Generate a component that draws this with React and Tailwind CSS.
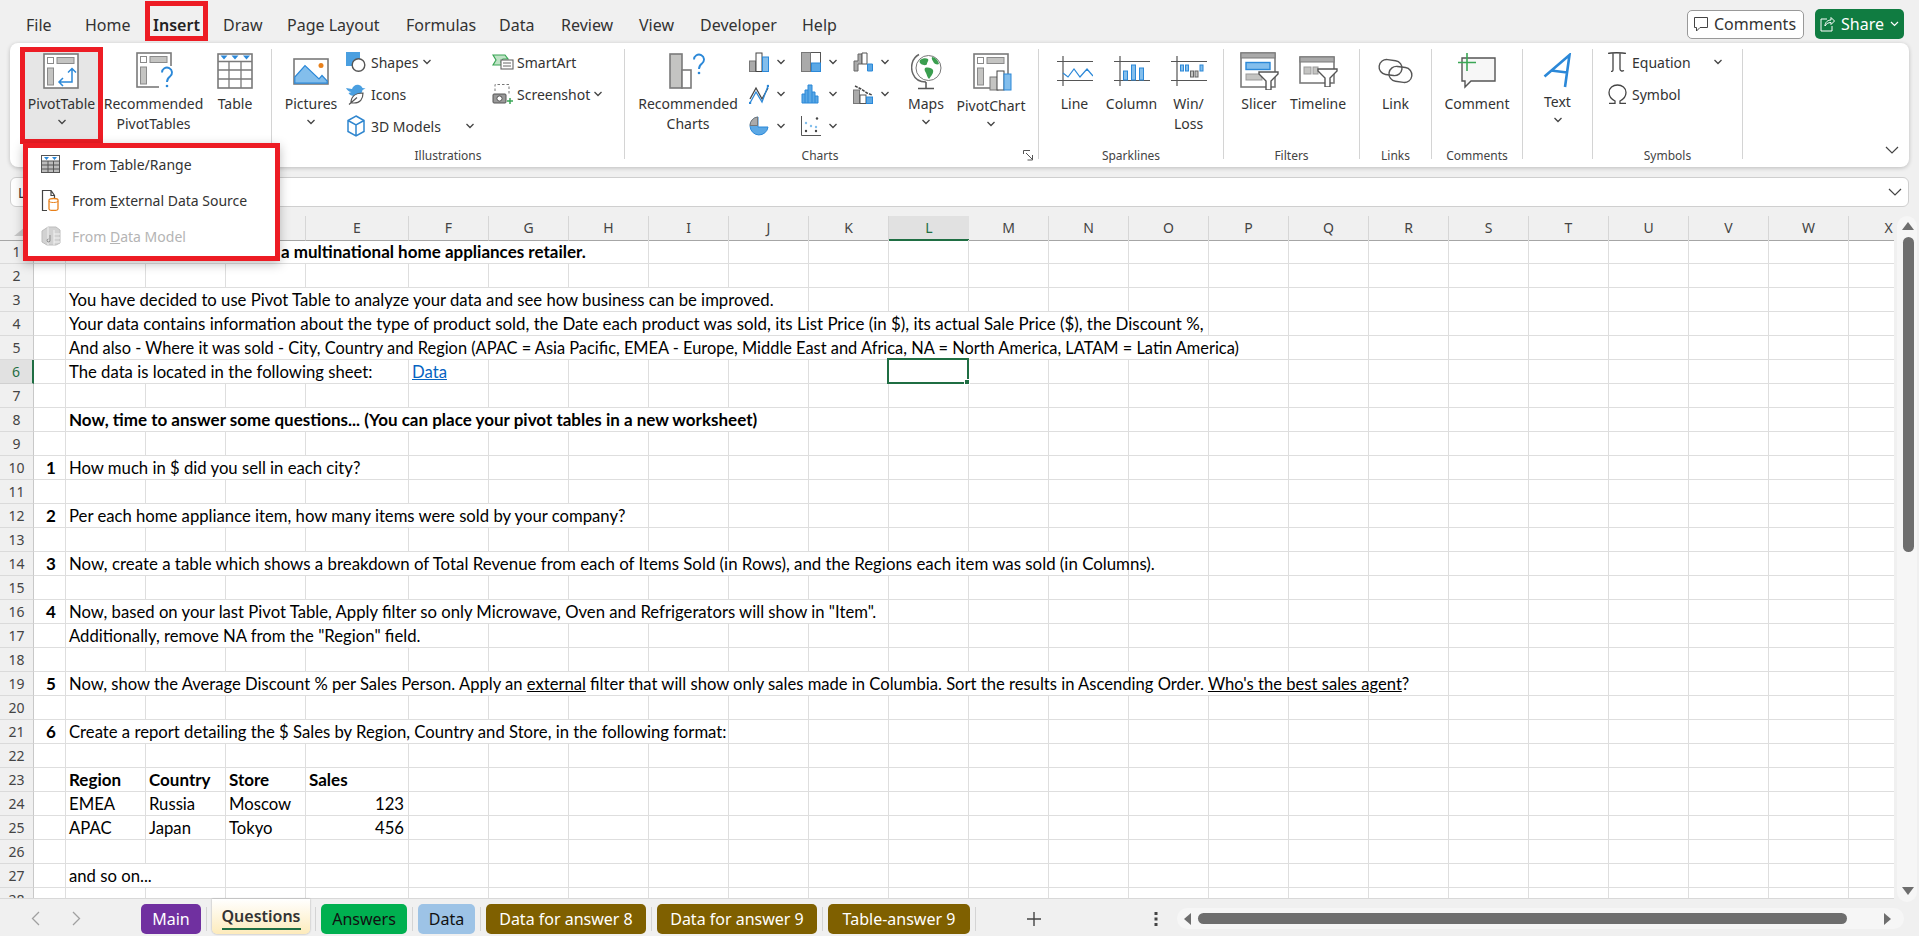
const UI = { fontFamily: '"Noto Sans", sans-serif' };
const CELL = { fontFamily: 'Lato, sans-serif' };

const G = '#7a7a7a';
const F = '#c4c4c2';
const B = '#2b88d8';
const L = '#83beec';

function Chevron({ className = '' }) {
  return (
    <svg width="10" height="6" viewBox="0 0 10 6" className={className}>
      <path d="M1.5 1l3.5 3.5L8.500 1" fill="none" stroke="#444" strokeWidth="1.3" />
    </svg>
  );
}

function PanelBase({ children }) {
  return (
    <svg width="40" height="38" viewBox="0 0 40 38" className="overflow-visible">
      <rect x="1" y="1" width="34" height="34" fill="#fff" stroke={G} strokeWidth="1.6" />
      <rect x="4.500" y="4.500" width="6" height="6" fill="#fff" stroke="#8a8a8a" />
      <rect x="14" y="4.500" width="17" height="6" fill={F} stroke="#8a8a8a" />
      <rect x="4.500" y="15" width="6" height="17" fill={F} stroke="#8a8a8a" />
      {children}
    </svg>
  );
}

const PivotIcon = () => (
  <PanelBase>
    <path d="M16 29h13V16M25 19.500l4-4 4 4M20 25l-4 4 4 4" fill="none" stroke={B} strokeWidth="1.5" />
  </PanelBase>
);

const Question = ({ x = 0, y = 0 }) => (
  <g transform={`translate(${x} ${y})`}>
    <path d="M1 5.500a5 5 0 1 1 8 4c-2 1.500-3 2.500-3 5.500" fill="none" stroke={B} strokeWidth="1.900" />
    <circle cx="6" cy="19" r="1.300" fill={B} />
  </g>
);

const RecPivotIcon = () => (
  <PanelBase>
    <rect x="23" y="14" width="14" height="24" fill="#fff" />
    <Question x="25" y="15" />
  </PanelBase>
);

function TableIcon() {
  return (
    <svg width="36" height="36" viewBox="0 0 36 36">
      <rect x="1" y="1" width="34" height="34" fill="#fff" stroke={G} strokeWidth="1.6" />
      <path d="M1 8.500h34M1 17h34M1 26h34M12 8.500V35M24 8.500V35" stroke={G} strokeWidth="1.300" />
      <path d="M3.500 2.500h7l-3.500 4zM14.500 2.500h7l-3.500 4zM26 2.500h7l-3.500 4z" fill={B} />
    </svg>
  );
}

function PicturesIcon() {
  return (
    <svg width="36" height="27" viewBox="0 0 36 27">
      <rect x="1" y="1" width="34" height="25" fill="#fff" stroke={G} strokeWidth="1.6" />
      <path d="M1.800 25.200V19L12 7.500 26 21l3-3.500 5.200 5.500v2.200z" fill={L} stroke={B} strokeWidth="1.200" />
      <circle cx="28" cy="7.500" r="2.500" fill="#e8801a" />
    </svg>
  );
}

function ShapesIcon() {
  return (
    <svg width="20" height="20" viewBox="0 0 20 20">
      <rect x="0" y="0" width="14" height="14" fill="#4a9fe0" />
      <circle cx="12.500" cy="13" r="6.300" fill="#fff" stroke="#555" strokeWidth="1.400" />
    </svg>
  );
}

function IconsIcon() {
  return (
    <svg width="20" height="22" viewBox="0 0 20 22">
      <path d="M0 5l6 1c1-3 4-5 7-4 2 .5 3 2 3.500 3l3 .5-3 1.500c-.500 4-4 6-8 6-3 0-5-1-6-3l3-1C3 9 1 7 0 5z" fill="#4a9fe0" />
      <path d="M5 20c0-6 4-10 12-10 0 6-3 10-9 10H5zM3 21.500l8-7" fill="#fff" stroke="#555" strokeWidth="1.200" />
    </svg>
  );
}

function ModelsIcon() {
  return (
    <svg width="20" height="22" viewBox="0 0 20 22">
      <path d="M10 1l8 4.500v11L10 21l-8-4.500v-11zM2 5.500l8 4.500 8-4.500M10 10v11" fill="#fff" stroke="#2f86cf" strokeWidth="1.500" />
    </svg>
  );
}

function SmartArtIcon() {
  return (
    <svg width="22" height="20" viewBox="0 0 22 20">
      <path d="M1 3h12l3 4h-5l-2 3 2 3H1l3-5z" fill="#bfe3c6" stroke="#3aa655" strokeWidth="1.200" />
      <rect x="9" y="8" width="12" height="9" fill="#fff" stroke="#666" strokeWidth="1.100" />
      <path d="M11 11h8M11 14h8" stroke="#666" />
    </svg>
  );
}

function ScreenshotIcon() {
  return (
    <svg width="22" height="22" viewBox="0 0 22 22">
      <path d="M3 8V1.500h14V11" fill="none" stroke="#777" strokeDasharray="2.500 2" />
      <rect x="1" y="11" width="13" height="9" rx="1" fill="#999" stroke="#555" />
      <circle cx="7.500" cy="15.500" r="2.600" fill="#fff" stroke="#555" />
      <path d="M18 15v6M15 18h6" stroke="#3aa655" strokeWidth="1.500" />
    </svg>
  );
}

// small chart icons in the Charts group
function ColumnChart() {
  return (
    <svg width="20" height="20" viewBox="0 0 20 20">
      <rect x="0.500" y="9" width="6" height="10.500" fill="#aaa" stroke="#777" />
      <rect x="7" y="1" width="6" height="18.500" fill="#fff" stroke="#444" />
      <rect x="13.500" y="5" width="6" height="14.500" fill={L} stroke={B} />
    </svg>
  );
}
function TreeChart() {
  return (
    <svg width="20" height="20" viewBox="0 0 20 20">
      <rect x="0.500" y="0.500" width="19" height="19" fill="#fff" stroke="#555" />
      <rect x="0.500" y="0.500" width="9" height="19" fill="#aaa" stroke="#777" />
      <rect x="10.500" y="11" width="9" height="8.500" fill="#5ba8e5" stroke={B} />
    </svg>
  );
}
function WaterfallChart() {
  return (
    <svg width="20" height="20" viewBox="0 0 20 20">
      <path d="M1 19V9h4V2h4v10H5v7z" fill="#aaa" stroke="#666" />
      <path d="M9 1h5v11H9z" fill="#fff" stroke="#555" />
      <path d="M14.500 12h5v7h-5z" fill="#5ba8e5" stroke={B} />
    </svg>
  );
}
function LineChart() {
  return (
    <svg width="20" height="20" viewBox="0 0 20 20">
      <path d="M1 15L7 4l6 11 6-11" fill="none" stroke="#444" strokeWidth="1.300" />
      <path d="M1 19L7 8l6 10 6-16" fill="none" stroke={B} strokeWidth="1.300" />
      <circle cx="1" cy="19" r="1.300" fill={B} /><circle cx="19" cy="2" r="1.300" fill={B} />
    </svg>
  );
}
function HistChart() {
  return (
    <svg width="18" height="20" viewBox="0 0 18 20">
      <path d="M1 19V10h3V6h3V1h4v7h3v4h3v7z" fill="#5ba8e5" stroke={B} />
      <path d="M4 19V10M7 19V6M11 19V8M14 19v-7" stroke={B} />
    </svg>
  );
}
function ComboChart() {
  return (
    <svg width="20" height="20" viewBox="0 0 20 20">
      <rect x="0.500" y="6" width="6" height="13.500" fill="#aaa" stroke="#777" />
      <rect x="7" y="11" width="6" height="8.500" fill="#fff" stroke="#555" />
      <rect x="13.500" y="13" width="6" height="6.500" fill="#5ba8e5" stroke={B} />
      <path d="M2 2l6 3 6 4 5 2" fill="none" stroke="#444" strokeWidth="1.500" strokeDasharray="3 1" />
    </svg>
  );
}
function PieChart() {
  return (
    <svg width="20" height="20" viewBox="0 0 20 20">
      <path d="M9 1a9 9 0 1 0 10 10H9z" fill="#5ba8e5" stroke={B} />
      <path d="M8.500 1A8.500 8.500 0 0 0 1 9.500h7.500z" fill="#aaa" stroke="#777" />
    </svg>
  );
}
function ScatterChart() {
  return (
    <svg width="20" height="20" viewBox="0 0 20 20">
      <path d="M.5 0v19.500H20" fill="none" stroke="#555" />
      <g fill={L}><circle cx="5" cy="7" r="1.200" /><circle cx="10" cy="10" r="1.200" /><circle cx="15" cy="11" r="1.200" /></g>
      <g fill="#444"><circle cx="16" cy="2.500" r="1.200" /><circle cx="5" cy="15" r="1.200" /><circle cx="15" cy="15" r="1.200" /></g>
    </svg>
  );
}

function RecChartsIcon() {
  return (
    <svg width="38" height="36" viewBox="0 0 38 36">
      <rect x="1" y="1" width="12" height="34" fill={F} stroke={G} strokeWidth="1.600" />
      <rect x="13" y="17" width="9" height="18" fill="#fff" stroke={G} strokeWidth="1.600" />
      <Question x="24" y="1" />
    </svg>
  );
}

function MapsIcon() {
  return (
    <svg width="31" height="37" viewBox="0 0 31 37">
      <path d="M8 1.500C1 5 -1 14 2 21c2 5 7 8 13 8" fill="none" stroke="#666" strokeWidth="1.500" />
      <path d="M15 29v6M7 35.500h16" stroke="#555" strokeWidth="1.500" />
      <circle cx="17.500" cy="15" r="12.500" fill="#fff" stroke="#777" />
      <path d="M9 7c3-2 6-2 8-1 1 2-1 3-1 5-1 2-4 1-6 0-1-1-2-2-1-4zM21 4c3 0 6 3 7 7-2 1-4 0-5-1-1-2-3-4-2-6zM14 15c3-1 7 0 8 2 1 3-2 6-4 9-2-2-2-4-3-6-1-2-2-3-1-5z" fill="#3a9e4f" />
    </svg>
  );
}

const PivotChartIcon = () => (
  <PanelBase>
    <rect x="17" y="24" width="8" height="13" fill={F} stroke="#777" />
    <rect x="24" y="18" width="7" height="19" fill="#fff" stroke="#444" />
    <rect x="31" y="21" width="7" height="16" fill={L} stroke={B} />
  </PanelBase>
);

function Spark({ children }) {
  return (
    <svg width="36" height="30" viewBox="0 0 36 30">
      <path d="M0 5.500h36M0 24.500h36M6 0v30" stroke="#555" strokeWidth="1.200" />
      {children}
    </svg>
  );
}
const SparkLine = () => (
  <Spark>
    <path d="M6 17l5 4 6-8 6 8 7-8 6 7" fill="none" stroke={B} strokeWidth="1.200" />
  </Spark>
);
const SparkColumn = () => (
  <Spark>
    <g fill={L} stroke={B}><rect x="9.500" y="15" width="4" height="9" /><rect x="17.500" y="9" width="4" height="15" /><rect x="25.500" y="12" width="4" height="12" /></g>
  </Spark>
);
const SparkWin = () => (
  <Spark>
    <g fill={L} stroke={B}><rect x="9.500" y="9" width="3" height="6" /><rect x="14.500" y="9" width="3" height="6" /><rect x="29" y="9" width="3" height="6" /></g>
    <g fill={F} stroke="#666"><rect x="19.500" y="15" width="3" height="6" /><rect x="24" y="15" width="3" height="6" /></g>
  </Spark>
);

const Funnel = ({ x, y }) => (
  <path transform={`translate(${x} ${y})`} d="M0 0h19v2l-7 7v9H7V9L0 2z" fill="#fff" stroke="#555" strokeWidth="1.400" />
);

function SlicerIcon() {
  return (
    <svg width="39" height="38" viewBox="0 0 39 38">
      <rect x="1" y="1" width="34" height="34" fill="#fff" stroke={G} strokeWidth="1.600" />
      <rect x="1" y="1" width="34" height="5" fill="#aaa" stroke={G} />
      <rect x="6" y="10.500" width="24" height="7" fill={L} stroke={B} strokeWidth="1.400" />
      <rect x="6" y="22" width="16" height="6" fill={F} stroke="#999" />
      <Funnel x="19" y="20" />
    </svg>
  );
}

function TimelineIcon() {
  return (
    <svg width="39" height="31" viewBox="0 0 39 31">
      <rect x="1" y="1" width="34" height="26" fill="#fff" stroke={G} strokeWidth="1.600" />
      <rect x="1" y="1" width="34" height="5" fill="#aaa" stroke={G} />
      <rect x="5" y="11" width="7" height="7" fill={F} stroke="#999" />
      <rect x="14" y="11" width="5" height="7" fill={F} stroke="#999" />
      <Funnel x="19" y="13" />
    </svg>
  );
}

function LinkIcon() {
  return (
    <svg width="36" height="26" viewBox="0 0 36 26">
      <rect x="1" y="2" width="23" height="15" rx="7.500" fill="none" stroke="#555" strokeWidth="1.400" transform="rotate(8 12 10)" />
      <rect x="11" y="9" width="23" height="15" rx="7.500" fill="none" stroke="#555" strokeWidth="1.400" transform="rotate(8 23 16)" />
    </svg>
  );
}

function CommentIcon() {
  return (
    <svg width="38" height="36" viewBox="0 0 38 36">
      <path d="M4 5h33v23H13l-6 6v-6H4z" fill="#f7f7f7" stroke="#555" strokeWidth="1.400" />
      <path d="M9 0v18M0 9.500h18" stroke="#3aa655" strokeWidth="1.600" />
    </svg>
  );
}

function TextIcon() {
  return (
    <svg width="29" height="35" viewBox="0 0 29 35">
      <path d="M1.500 23.500L26.500 2 22 34M8 17.500l16 2" fill="none" stroke={B} strokeWidth="2.600" />
    </svg>
  );
}

function PiIcon() {
  return (
    <svg width="18" height="20" viewBox="0 0 18 20">
      <path d="M0 1.500c2-1 15-1 18 0M5 1v17c0 1-1 1.500-2 1.500M12 1v16c0 2 2 2.500 4 1.500" fill="none" stroke="#444" strokeWidth="1.300" />
    </svg>
  );
}

function OmegaIcon() {
  return (
    <svg width="19" height="20" viewBox="0 0 19 20">
      <path d="M1 19.500h6V17C3 15 1 12 1 8.500 1 4 5 1 9.500 1S18 4 18 8.500c0 3.500-2 6.500-6 8.500v2.500h6" fill="none" stroke="#444" strokeWidth="1.300" />
    </svg>
  );
}

function MenuTableIcon() {
  return (
    <svg width="19" height="18" viewBox="0 0 19 18">
      <rect x="0.500" y="0.500" width="18" height="17" fill="#fff" stroke="#555" />
      <rect x="1" y="6" width="17" height="11" fill="#bbb" />
      <path d="M1 6h17M1 10h17M1 14h17M7 6v11M12.500 6v11" stroke="#555" />
      <path d="M3 2h5L5.500 5zM11 2h5l-2.500 3z" fill={B} />
    </svg>
  );
}

function MenuSourceIcon() {
  return (
    <svg width="19" height="21" viewBox="0 0 19 21">
      <path d="M6 20.500H1.500V.5H10l3.500 5V8M10 .5v5h3.500" fill="none" stroke="#444" strokeWidth="1.200" />
      <path d="M8 10c0-2 9-2 9 0v9c0 2-9 2-9 0z" fill="#fff" stroke="#e8801a" strokeWidth="1.300" />
      <path d="M8 11c0 2 9 2 9 0" fill="none" stroke="#e8801a" />
    </svg>
  );
}

function MenuModelIcon() {
  return (
    <svg width="20" height="20" viewBox="0 0 20 20">
      <path d="M1 5l6-4h8l4 3v13l-4 2H6l-5-3z" fill="#d2d2d2" stroke="#bdbdbd" />
      <path d="M7 1v18M13 4v15M13 8h6M13 12h6M13 16h6" stroke="#f2f2f2" />
      <path d="M9 9v5a1.500 1.500 0 1 1-1.500-1" fill="none" stroke="#8c8c8c" />
    </svg>
  );
}

function Big({ icon, lines, chevron, w, h = 'h-[36px]', className = '' }) {
  return (
    <div className={`flex flex-col items-center pt-[4px] shrink-0 ${w} ${className}`}>
      <div className={`flex items-center justify-center ${h}`}>{icon}</div>
      <div className="mt-[5px] text-center leading-[20px] text-[14px] text-[#333] whitespace-nowrap">
        {lines.map(l => <div key={l}>{l}</div>)}
      </div>
      {chevron && <Chevron className="mt-[5px]" />}
    </div>
  );
}

function Small({ icon, label, chevron, chevronClass = 'ml-[4px]', gap = 'w-[25px]' }) {
  return (
    <div className="flex items-center h-[32px] text-[14px] text-[#333] whitespace-nowrap">
      <div className={`shrink-0 flex ${gap}`}>{icon}</div>
      {label}
      {chevron && <Chevron className={chevronClass} />}
    </div>
  );
}

function ChartBtn({ icon }) {
  return (
    <div className="flex items-center h-[32px]">
      <div className="w-[27px] flex">{icon}</div>
      <Chevron />
    </div>
  );
}

function Group({ w, label, labelClass = '', children, extra }) {
  return (
    <div className={`relative shrink-0 flex flex-col h-[118px] ${w}`}>
      <div className="h-[97px] flex">{children}</div>
      <div className={`h-[20px] leading-[20px] text-center text-[12px] text-[#444] whitespace-nowrap ${labelClass}`}>{label}</div>
      {extra}
    </div>
  );
}

const Sep = () => <div className="w-px h-[110px] bg-[#d4d4d4] shrink-0" />;

function Ribbon() {
  return (
    <div className="mx-[10px] h-[124px] bg-white rounded-[8px] shadow-[0_1px_4px_rgba(0,0,0,0.22)] flex items-start pt-[6px]">
      <Group w="w-[261px]" label="">
        <div className="ml-[10px] -mt-[2px] h-[97px] w-[83px] shrink-0 border-[5px] border-[#ed1c24] bg-[#e6e6e6] flex flex-col items-center pt-[1px]">
          <div className="h-[36px] pl-[3px]"><PivotIcon /></div>
          <div className="mt-[5px] leading-[20px] text-[14px] text-[#333]">PivotTable</div>
          <Chevron className="mt-[5px]" />
        </div>
        <Big w="w-[101px]" icon={<div className="pl-[4px]"><RecPivotIcon /></div>} lines={['Recommended', 'PivotTables']} />
        <Big w="w-[48px]" className="ml-[7px]" icon={<TableIcon />} lines={['Table']} />
      </Group>
      <Sep />
      <Group w="w-[352px]" label="Illustrations">
        <Big w="w-[60px]" className="ml-[9px]" icon={<PicturesIcon />} lines={['Pictures']} chevron />
        <div className="ml-[5px] -mt-[3px] w-[146px] shrink-0">
          <Small icon={<ShapesIcon />} label="Shapes" chevron />
          <Small icon={<IconsIcon />} label="Icons" />
          <Small icon={<ModelsIcon />} label="3D Models" chevron chevronClass="ml-[24px]" />
        </div>
        <div className="-mt-[3px]">
          <Small icon={<SmartArtIcon />} label="SmartArt" />
          <Small icon={<ScreenshotIcon />} label="Screenshot" chevron chevronClass="ml-[3px]" />
        </div>
      </Group>
      <Sep />
      <Group
        w="w-[413px]"
        label="Charts"
        labelClass="pr-[23px]"
        extra={
          <svg width="11" height="11" viewBox="0 0 11 11" className="absolute right-[4px] bottom-[6px]">
            <path d="M.5 4V.5H7M3 3l6 6M9.500 5v5h-5" fill="none" stroke="#555" />
          </svg>
        }
      >
        <Big w="w-[100px]" className="ml-[13px]" icon={<RecChartsIcon />} lines={['Recommended', 'Charts']} />
        <div className="ml-[11px] -mt-[3px] grid grid-cols-[52px_52px_48px] grid-rows-[32px_32px_32px] shrink-0">
          <ChartBtn icon={<ColumnChart />} />
          <ChartBtn icon={<TreeChart />} />
          <ChartBtn icon={<WaterfallChart />} />
          <ChartBtn icon={<LineChart />} />
          <ChartBtn icon={<HistChart />} />
          <ChartBtn icon={<ComboChart />} />
          <ChartBtn icon={<PieChart />} />
          <ChartBtn icon={<ScatterChart />} />
        </div>
        <Big w="w-[50px]" icon={<MapsIcon />} lines={['Maps']} chevron />
        <Big w="w-[70px]" className="ml-[5px]" h="h-[38px]" icon={<div className="pl-[4px]"><PivotChartIcon /></div>} lines={['PivotChart']} chevron />
      </Group>
      <Sep />
      <Group w="w-[184px]" label="Sparklines">
        <Big w="w-[57px]" className="ml-[7px]" icon={<SparkLine />} lines={['Line']} />
        <Big w="w-[57px]" icon={<SparkColumn />} lines={['Column']} />
        <Big w="w-[57px]" icon={<SparkWin />} lines={['Win/', 'Loss']} />
      </Group>
      <Sep />
      <Group w="w-[135px]" label="Filters">
        <Big w="w-[60px]" className="ml-[5px]" icon={<SlicerIcon />} lines={['Slicer']} />
        <Big w="w-[58px]" icon={<TimelineIcon />} lines={['Timeline']} />
      </Group>
      <Sep />
      <Group w="w-[71px]" label="Links">
        <Big w="w-full" icon={<LinkIcon />} lines={['Link']} />
      </Group>
      <Sep />
      <Group w="w-[90px]" label="Comments">
        <Big w="w-full" icon={<CommentIcon />} lines={['Comment']} />
      </Group>
      <Sep />
      <Group w="w-[69px]" label="">
        <Big w="w-full" h="h-[34px]" icon={<TextIcon />} lines={['Text']} chevron />
      </Group>
      <Sep />
      <Group w="w-[149px]" label="Symbols">
        <div className="pl-[15px] -mt-[3px] w-full">
          <Small icon={<PiIcon />} label="Equation" gap="w-[24px]" chevron chevronClass="ml-[22px]" />
          <Small icon={<OmegaIcon />} label="Symbol" gap="w-[24px]" />
        </div>
      </Group>
      <Sep />
      <div className="flex-1 h-[110px] flex items-end justify-end pr-[10px] pb-[5px]">
        <svg width="14" height="8" viewBox="0 0 14 8"><path d="M1 1l6 6 6-6" fill="none" stroke="#444" strokeWidth="1.200" /></svg>
      </div>
    </div>
  );
}

function TopTabs() {
  const tabs = [
    ['File', 'w-[59px]'],
    ['Home', 'w-[60px]'],
  ];
  const after = [
    ['Draw', 'w-[64px] ml-[15px]'],
    ['Page Layout', 'w-[119px]'],
    ['Formulas', 'w-[93px]'],
    ['Data', 'w-[62px]'],
    ['Review', 'w-[78px]'],
    ['View', 'w-[61px]'],
    ['Developer', 'w-[102px]'],
    ['Help', 'w-[60px]'],
  ];
  return (
    <div className="h-[43px] flex items-center pt-[6px] pl-[26px] text-[16px] text-[#333]">
      {tabs.map(([t, c]) => <div key={t} className={c}>{t}</div>)}
      <div className="self-start -mt-[5px] w-[63px] h-[40px] border-[5px] border-[#ed1c24] flex items-center justify-center pt-[8px] font-semibold text-[#222]">
        Insert
      </div>
      {after.map(([t, c]) => <div key={t} className={c}>{t}</div>)}
      <div className="ml-auto flex items-center mr-[15px] -mt-[1px]">
        <div className="w-[117px] h-[29px] bg-white border border-[#999] rounded-[5px] flex items-center pl-[6px] gap-[6px]">
          <svg width="14" height="15" viewBox="0 0 14 15"><path d="M.5.5h13v10H6l-3.500 3.500V10.500h-2z" fill="none" stroke="#444" /></svg>
          <span className="text-[#333]">Comments</span>
        </div>
        <div className="ml-[11px] w-[89px] h-[30px] bg-[#107c41] rounded-[5px] flex items-center pl-[5px] text-white">
          <svg width="15" height="16" viewBox="0 0 15 16" className="mr-[6px]"><path d="M7 3H1v12h11v-5M5 10c0-4 3-6 6-6V1.500L14.500 5 11 8.500V6.500c-3 0-5 1.500-6 3.500z" fill="none" stroke="#fff" /></svg>
          Share
          <svg width="9" height="6" viewBox="0 0 9 6" className="ml-[6px]"><path d="M1 1l3.500 3.500L8 1" fill="none" stroke="#fff" strokeWidth="1.200" /></svg>
        </div>
      </div>
    </div>
  );
}

const COLS = 'ABCDEFGHIJKLMNOPQRSTUVWX'.split('');
const GRID = 'grid grid-cols-[34px_32px_80px_80px_80px_103px_repeat(18,80px)_80px]';

const bold = 'font-bold text-[17px]';
const plain = 'text-[16.7px]';
const rows = {
  1: [{ col: 1, cls: `col-span-7 pl-[215px] ${bold}`, span: 7, text: 'a multinational home appliances retailer.' }],
  3: [{ col: 1, cls: `col-span-9 ${plain}`, span: 9, text: 'You have decided to use Pivot Table to analyze your data and see how business can be improved.' }],
  4: [{ col: 1, cls: 'col-span-14 text-[16.9px]', span: 14, text: 'Your data contains information about the type of product sold, the Date each product was sold, its List Price (in $), its actual Sale Price ($), the Discount %,' }],
  5: [{ col: 1, cls: 'col-span-15 text-[16.4px]', span: 15, text: 'And also - Where it was sold - City, Country and Region (APAC = Asia Pacific, EMEA - Europe, Middle East and Africa, NA = North America, LATAM = Latin America)' }],
  6: [
    { col: 1, cls: `col-span-4 ${plain}`, span: 4, text: 'The data is located in the following sheet:' },
    { col: 5, cls: `text-[#0563c1] underline ${plain}`, span: 1, text: 'Data' },
  ],
  8: [{ col: 1, cls: `col-span-9 ${bold}`, span: 9, text: 'Now, time to answer some questions... (You can place your pivot tables in a new worksheet)' }],
  10: [
    { col: 0, cls: `text-center ${bold}`, span: 1, text: '1' },
    { col: 1, cls: `col-span-4 ${plain}`, span: 4, text: 'How much in $ did you sell in each city?' },
  ],
  12: [
    { col: 0, cls: `text-center ${bold}`, span: 1, text: '2' },
    { col: 1, cls: `col-span-7 ${plain}`, span: 7, text: 'Per each home appliance item, how many items were sold by your company?' },
  ],
  14: [
    { col: 0, cls: `text-center ${bold}`, span: 1, text: '3' },
    { col: 1, cls: 'col-span-13 text-[16.85px]', span: 13, text: 'Now, create a table which shows a breakdown of Total Revenue from each of Items Sold (in Rows), and the Regions each item was sold (in Columns).' },
  ],
  16: [
    { col: 0, cls: `text-center ${bold}`, span: 1, text: '4' },
    { col: 1, cls: `col-span-10 ${plain}`, span: 10, text: 'Now, based on your last Pivot Table, Apply filter so only Microwave, Oven and Refrigerators will show in "Item".' },
  ],
  17: [{ col: 1, cls: `col-span-5 ${plain}`, span: 5, text: 'Additionally, remove NA from the "Region" field.' }],
  19: [
    { col: 0, cls: `text-center ${bold}`, span: 1, text: '5' },
    {
      col: 1,
      cls: 'col-span-17 text-[16.6px]',
      span: 17,
      text: (
        <>
          Now, show the Average Discount % per Sales Person. Apply an <u>external</u> filter that will show only sales made in Columbia. Sort the results in Ascending Order. <u>Who's the best sales agent</u>?
        </>
      ),
    },
  ],
  21: [
    { col: 0, cls: `text-center ${bold}`, span: 1, text: '6' },
    { col: 1, cls: `col-span-8 ${plain}`, span: 8, text: 'Create a report detailing the $ Sales by Region, Country and Store, in the following format:' },
  ],
  23: [
    { col: 1, cls: bold, span: 1, text: 'Region' },
    { col: 2, cls: bold, span: 1, text: 'Country' },
    { col: 3, cls: bold, span: 1, text: 'Store' },
    { col: 4, cls: bold, span: 1, text: 'Sales' },
  ],
  24: [
    { col: 1, cls: plain, span: 1, text: 'EMEA' },
    { col: 2, cls: plain, span: 1, text: 'Russia' },
    { col: 3, cls: plain, span: 1, text: 'Moscow' },
    { col: 4, cls: `text-right pr-[4px] ${plain}`, span: 1, text: '123' },
  ],
  25: [
    { col: 1, cls: plain, span: 1, text: 'APAC' },
    { col: 2, cls: plain, span: 1, text: 'Japan' },
    { col: 3, cls: plain, span: 1, text: 'Tokyo' },
    { col: 4, cls: `text-right pr-[4px] ${plain}`, span: 1, text: '456' },
  ],
  27: [{ col: 1, cls: `col-span-2 ${plain}`, span: 2, text: 'and so on...' }],
};

function Row({ n }) {
  const specs = rows[n] || [];
  const cells = [];
  for (let i = 0; i < COLS.length; i++) {
    const s = specs.find(c => c.col === i);
    const selected = n === 6 && i === 11;
    cells.push(
      <div key={i} style={CELL} className={`relative border-r border-b border-[#dedede] h-[24px] leading-[24px] whitespace-nowrap pl-[3px] ${s ? s.cls : ''}`}>
        {s && s.text}
        {selected && (
          <div className="absolute z-10 -left-[2px] -top-[2px] -right-[1px] -bottom-[1px] border-2 border-[#1f6e43]">
            <div className="absolute -right-[3px] -bottom-[3px] w-[6px] h-[6px] bg-[#1f6e43] border border-white" />
          </div>
        )}
      </div>
    );
    if (s) i += s.span - 1;
  }
  const active = n === 6;
  return (
    <div className={`${GRID} text-black`}>
      <div style={UI} className={`h-[24px] border-b text-center leading-[23px] text-[14px] ${active ? 'bg-[#e1e1e1] border-[#d0d0d0] border-r-2 border-r-[#1f6e43] text-[#1f6e43]' : 'bg-[#f0f0f0] border-[#dadada] border-r border-r-[#c8c8c8] text-[#444]'}`}>{n}</div>
      {cells}
    </div>
  );
}

function Sheet() {
  const nums = Array.from({ length: 28 }, (_, i) => i + 1);
  return (
    <div className="mt-[9px] flex h-[683px]">
      <div className="w-[1894px] h-[683px] overflow-hidden bg-white border-b border-[#d8d8d8]">
        <div className={`${GRID} h-[24px] bg-[#f0f0f0]`}>
          <div className="relative border-b border-[#a6a6a6] border-r border-r-[#d6d6d6]">
            <svg width="11" height="9" viewBox="0 0 11 9" className="absolute left-[14px] bottom-[4px]"><path d="M11 0v9H0z" fill="#c8c8c8" /></svg>
          </div>
          {COLS.map(c => (
            <div
              key={c}
              style={UI}
              className={`text-center text-[14px] leading-[23px] ${c === 'L' ? 'bg-[#e1e1e1] text-[#1f6e43] border-b-2 border-[#1f6e43]' : 'text-[#444] border-b border-[#a6a6a6] border-r border-r-[#d6d6d6]'}`}
            >
              {c}
            </div>
          ))}
        </div>
        {nums.map(n => <Row key={n} n={n} />)}
      </div>
      <div className="relative ml-[3px] w-[20px] h-[686px] rounded-full bg-[#f6f6f6] flex flex-col items-center">
        <svg width="12" height="8" viewBox="0 0 12 8" className="mt-[6px] ml-[2px]"><path d="M6 0l6 8H0z" fill="#6e6e6e" /></svg>
        <div className="mt-[7px] ml-[2px] w-[11px] h-[315px] rounded-full bg-[#6e6e6e]" />
        <svg width="12" height="8" viewBox="0 0 12 8" className="mt-auto mb-[7px] ml-[2px]"><path d="M6 8l6-8H0z" fill="#6e6e6e" /></svg>
      </div>
    </div>
  );
}

function SheetTab({ label, className }) {
  return (
    <div className={`mt-[5px] h-[30px] rounded-[5px] flex items-center justify-center text-[16px] ${className}`}>{label}</div>
  );
}

const TabSep = ({ className = 'mx-[5px]' }) => <div className={`mt-[8px] w-px h-[24px] bg-[#d4d4d4] shrink-0 ${className}`} />;

function BottomBar() {
  return (
    <div className="h-[38px] flex items-start">
      <div className="w-[141px] h-[38px] flex items-center pl-[31px] gap-[32px] pt-[1px]">
        <svg width="9" height="15" viewBox="0 0 9 15"><path d="M8 1L1.500 7.500 8 14" fill="none" stroke="#a0a0a0" strokeWidth="1.300" /></svg>
        <svg width="9" height="15" viewBox="0 0 9 15"><path d="M1 1l6.500 6.500L1 14" fill="none" stroke="#a0a0a0" strokeWidth="1.300" /></svg>
      </div>
      <SheetTab label="Main" className="w-[60px] bg-[#7030a0] text-white" />
      <TabSep />
      <div className="relative h-[35px] w-[98px] rounded-b-[5px] bg-gradient-to-b from-white to-[#fdebbb] shadow-[0_0_2px_rgba(0,0,0,0.35)] text-center text-[16px] leading-[34px] font-semibold text-[#333]">
        Questions
        <div className="absolute left-[10px] right-[9px] bottom-[4px] h-[2px] bg-[#1f6e43]" />
      </div>
      <TabSep />
      <SheetTab label="Answers" className="w-[86px] bg-[#00b050] text-[#111]" />
      <TabSep />
      <SheetTab label="Data" className="w-[57px] bg-[#9dc3e6] text-[#111]" />
      <TabSep />
      <SheetTab label="Data for answer 8" className="w-[160px] bg-[#7f6000] text-white" />
      <TabSep />
      <SheetTab label="Data for answer 9" className="w-[160px] bg-[#7f6000] text-white" />
      <TabSep />
      <SheetTab label="Table-answer 9" className="w-[142px] bg-[#7f6000] text-white" />
      <TabSep />
      <div className="ml-[45px] h-[38px] flex items-center pt-[1px]">
        <svg width="16" height="16" viewBox="0 0 16 16"><path d="M8 1v14M1 8h14" stroke="#444" strokeWidth="1.400" /></svg>
      </div>
      <div className="ml-[112px] h-[38px] flex items-center pt-[1px]">
        <svg width="4" height="14" viewBox="0 0 4 14"><g fill="#444"><rect x="0.500" y="0" width="3" height="3" /><rect x="0.500" y="5.500" width="3" height="3" /><rect x="0.500" y="11" width="3" height="3" /></g></svg>
      </div>
      <div className="ml-[19px] mt-[9px] w-[727px] h-[21px] rounded-full bg-[#f6f6f6] flex items-center">
        <svg width="7" height="12" viewBox="0 0 7 12" className="ml-[7px]"><path d="M0 6l7-6v12z" fill="#6e6e6e" /></svg>
        <div className="ml-[7px] w-[649px] h-[11px] rounded-full bg-[#6e6e6e]" />
        <svg width="7" height="12" viewBox="0 0 7 12" className="ml-[37px]"><path d="M7 6L0 0v12z" fill="#6e6e6e" /></svg>
      </div>
    </div>
  );
}

function PivotMenu() {
  const items = [
    { icon: <MenuTableIcon />, label: <span>From <u>T</u>able/Range</span>, cls: 'text-[#333]' },
    { icon: <MenuSourceIcon />, label: <span>From <u>E</u>xternal Data Source</span>, cls: 'text-[#333]' },
    { icon: <MenuModelIcon />, label: <span>From <u>D</u>ata Model</span>, cls: 'text-[#b4b4b4]' },
  ];
  return (
    <div className="absolute left-[23px] top-[143px] w-[257px] h-[118px] border-[5px] border-[#ed1c24] bg-white shadow-[0_3px_10px_rgba(0,0,0,0.25)] z-20">
      <div className="-mt-[2px]">
        {items.map((it, i) => (
          <div key={i} className={`flex items-center h-[36px] pl-[13px] text-[14px] ${it.cls}`}>
            <div className="w-[31px] flex">{it.icon}</div>
            {it.label}
          </div>
        ))}
      </div>
    </div>
  );
}

export default function App() {
  return (
    <div style={UI} className="relative w-[1919px] h-[936px] overflow-hidden bg-[#f0f0f0]">
      <TopTabs />
      <Ribbon />
      <div className="mx-[10px] mt-[10px] h-[30px] bg-white border border-[#cfcfcf] rounded-[6px] flex items-center justify-between pl-[7px] pr-[6px] text-[14px] text-[#333]">
        <span>L6</span>
        <svg width="14" height="8" viewBox="0 0 14 8"><path d="M1 1l6 6 6-6" fill="none" stroke="#444" strokeWidth="1.200" /></svg>
      </div>
      <Sheet />
      <BottomBar />
      <PivotMenu />
    </div>
  );
}
